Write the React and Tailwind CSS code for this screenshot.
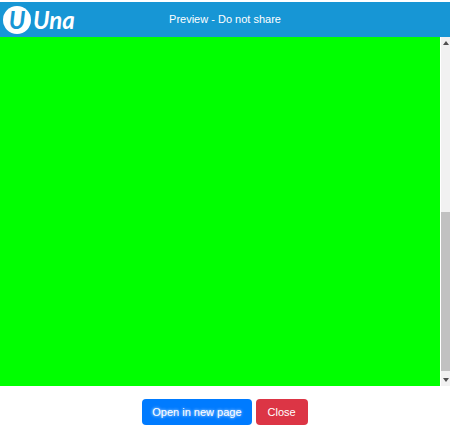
import React from "react";

function Logo() {
  return (
    <a href="#" aria-label="Una" className="flex items-center gap-0.5 text-white">
      <span className="flex h-7 w-7 items-center justify-center rounded-full bg-white font-['Lato'] text-2xl leading-none font-bold italic text-[#1796d5]">
        U
      </span>
      <span className="font-['Lato'] text-2xl leading-7 font-bold italic">Una</span>
    </a>
  );
}

function Header() {
  return (
    <header className="mt-0.5 grid h-[35px] grid-cols-[1fr_auto_1fr] items-center bg-[#1796d5] px-[3px]">
      <Logo />
      <h1 className="text-[11px] text-white">Preview - Do not share</h1>
    </header>
  );
}

function Arrow({ down }) {
  return (
    <svg viewBox="0 0 6 4" className="my-1 h-1 w-1.5 shrink-0" fill="#505050">
      <path d={down ? "M0 0h6L3 4z" : "M0 4h6L3 0z"} />
    </svg>
  );
}

function Scrollbar() {
  return (
    <div className="ml-px flex w-[9px] flex-col items-center bg-[#f1f1f1]">
      <Arrow />
      {/* the thumb sits at the end of the track */}
      <div className="flex w-full flex-1 flex-col justify-end py-[3px]">
        <div className="h-1/2 bg-[#c1c1c1]" />
      </div>
      <Arrow down />
    </div>
  );
}

export default function App() {
  return (
    <div className="flex min-h-screen flex-col bg-white font-['Liberation_Sans',sans-serif]">
      <Header />

      <main className="flex flex-1">
        <div className="flex-1 bg-[#00ff00]" />
        <Scrollbar />
      </main>

      <footer className="flex justify-center gap-1 pt-[13px] pb-0.5 text-[11px] text-white">
        <button
          type="button"
          className="h-[26px] rounded bg-[#007bff] px-2.5 [text-shadow:0_0_3px_#fff]"
        >
          Open in new page
        </button>
        <button type="button" className="h-[26px] rounded bg-[#dc3545] px-3">
          Close
        </button>
      </footer>
    </div>
  );
}
